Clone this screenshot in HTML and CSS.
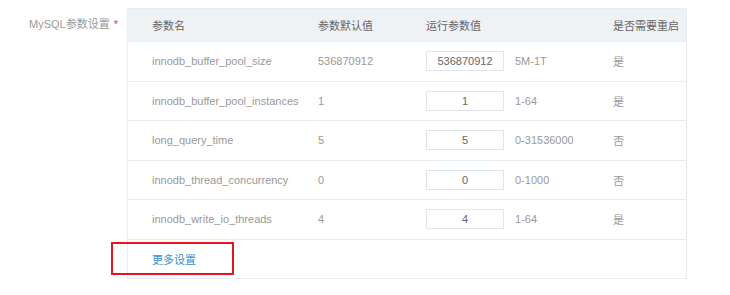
FILE: index.html
```html
<!DOCTYPE html>
<html lang="zh-CN">
<head>
<meta charset="UTF-8">
<title>MySQL参数设置</title>
<link rel="stylesheet" href="styles.css">
</head>
<body>
    <!-- MySQL parameter settings row -->
    <div class="form-row">
        <div class="form-label">MySQL参数设置<span class="required">*</span></div>

        <div class="param-table">
            <div class="param-head">
                <div>参数名</div>
                <div>参数默认值</div>
                <div>运行参数值</div>
                <div>是否需要重启</div>
            </div>

            <div class="param-row">
                <div>innodb_buffer_pool_size</div>
                <div>536870912</div>
                <div class="run-cell"><input class="run-input" type="text" value="536870912"><span>5M-1T</span></div>
                <div>是</div>
            </div>
            <div class="param-row">
                <div>innodb_buffer_pool_instances</div>
                <div>1</div>
                <div class="run-cell"><input class="run-input" type="text" value="1"><span>1-64</span></div>
                <div>是</div>
            </div>
            <div class="param-row">
                <div>long_query_time</div>
                <div>5</div>
                <div class="run-cell"><input class="run-input" type="text" value="5"><span>0-31536000</span></div>
                <div>否</div>
            </div>
            <div class="param-row">
                <div>innodb_thread_concurrency</div>
                <div>0</div>
                <div class="run-cell"><input class="run-input" type="text" value="0"><span>0-1000</span></div>
                <div>否</div>
            </div>
            <div class="param-row">
                <div>innodb_write_io_threads</div>
                <div>4</div>
                <div class="run-cell"><input class="run-input" type="text" value="4"><span>1-64</span></div>
                <div>是</div>
            </div>

            <div class="param-foot">
                <a href="#" class="more-link">更多设置</a>
                <!-- red annotation box -->
                <div class="mark-box"></div>
            </div>
        </div>
    </div>
</body>
</html>
```

FILE: styles.css
```css
/* General formatting */
body {
    margin: 0;
    padding: 0;
    background-color: #ffffff;
    font-family: "Liberation Sans", Arial, "Noto Sans CJK SC", sans-serif;
    font-size: 11px;
    color: #999999;
}

.form-row {
    display: flex;
    align-items: flex-start;
    padding-top: 8px;
}

.form-label {
    width: 118px;
    padding-right: 9px;
    text-align: right;
    line-height: 33px;
    color: #999999;
}

.required {
    color: #e8343c;
    margin-left: 4px;
}

/* Parameter table */
.param-table {
    width: 558px;
    border: 1px solid #e6ecf0;
}

.param-head,
.param-row {
    display: grid;
    grid-template-columns: 166px 108px 187px 1fr;
    align-items: center;
    border-bottom: 1px solid #e6ecf0;
}

.param-head > div,
.param-row > div {
    padding-left: 24px;
}

.param-head {
    height: 32px;
    background-color: #eef2f5;
    color: #666666;
}

.param-row {
    height: 39.5px;
    box-sizing: border-box;
}

.run-cell {
    display: flex;
    align-items: center;
    gap: 11px;
}

.run-input {
    width: 78px;
    height: 20px;
    box-sizing: border-box;
    border: 1px solid #dfe6eb;
    padding: 0;
    text-align: center;
    font-family: inherit;
    font-size: 11px;
    color: #666666;
    outline: none;
}

.param-foot {
    position: relative;
    height: 38px;
    display: flex;
    align-items: center;
    padding-left: 24px;
}

.more-link {
    color: #3f8fc5;
    text-decoration: none;
}

.mark-box {
    position: absolute;
    left: -17px;
    top: 2px;
    width: 119px;
    height: 29px;
    border: 2px solid #e6141e;
}
```
